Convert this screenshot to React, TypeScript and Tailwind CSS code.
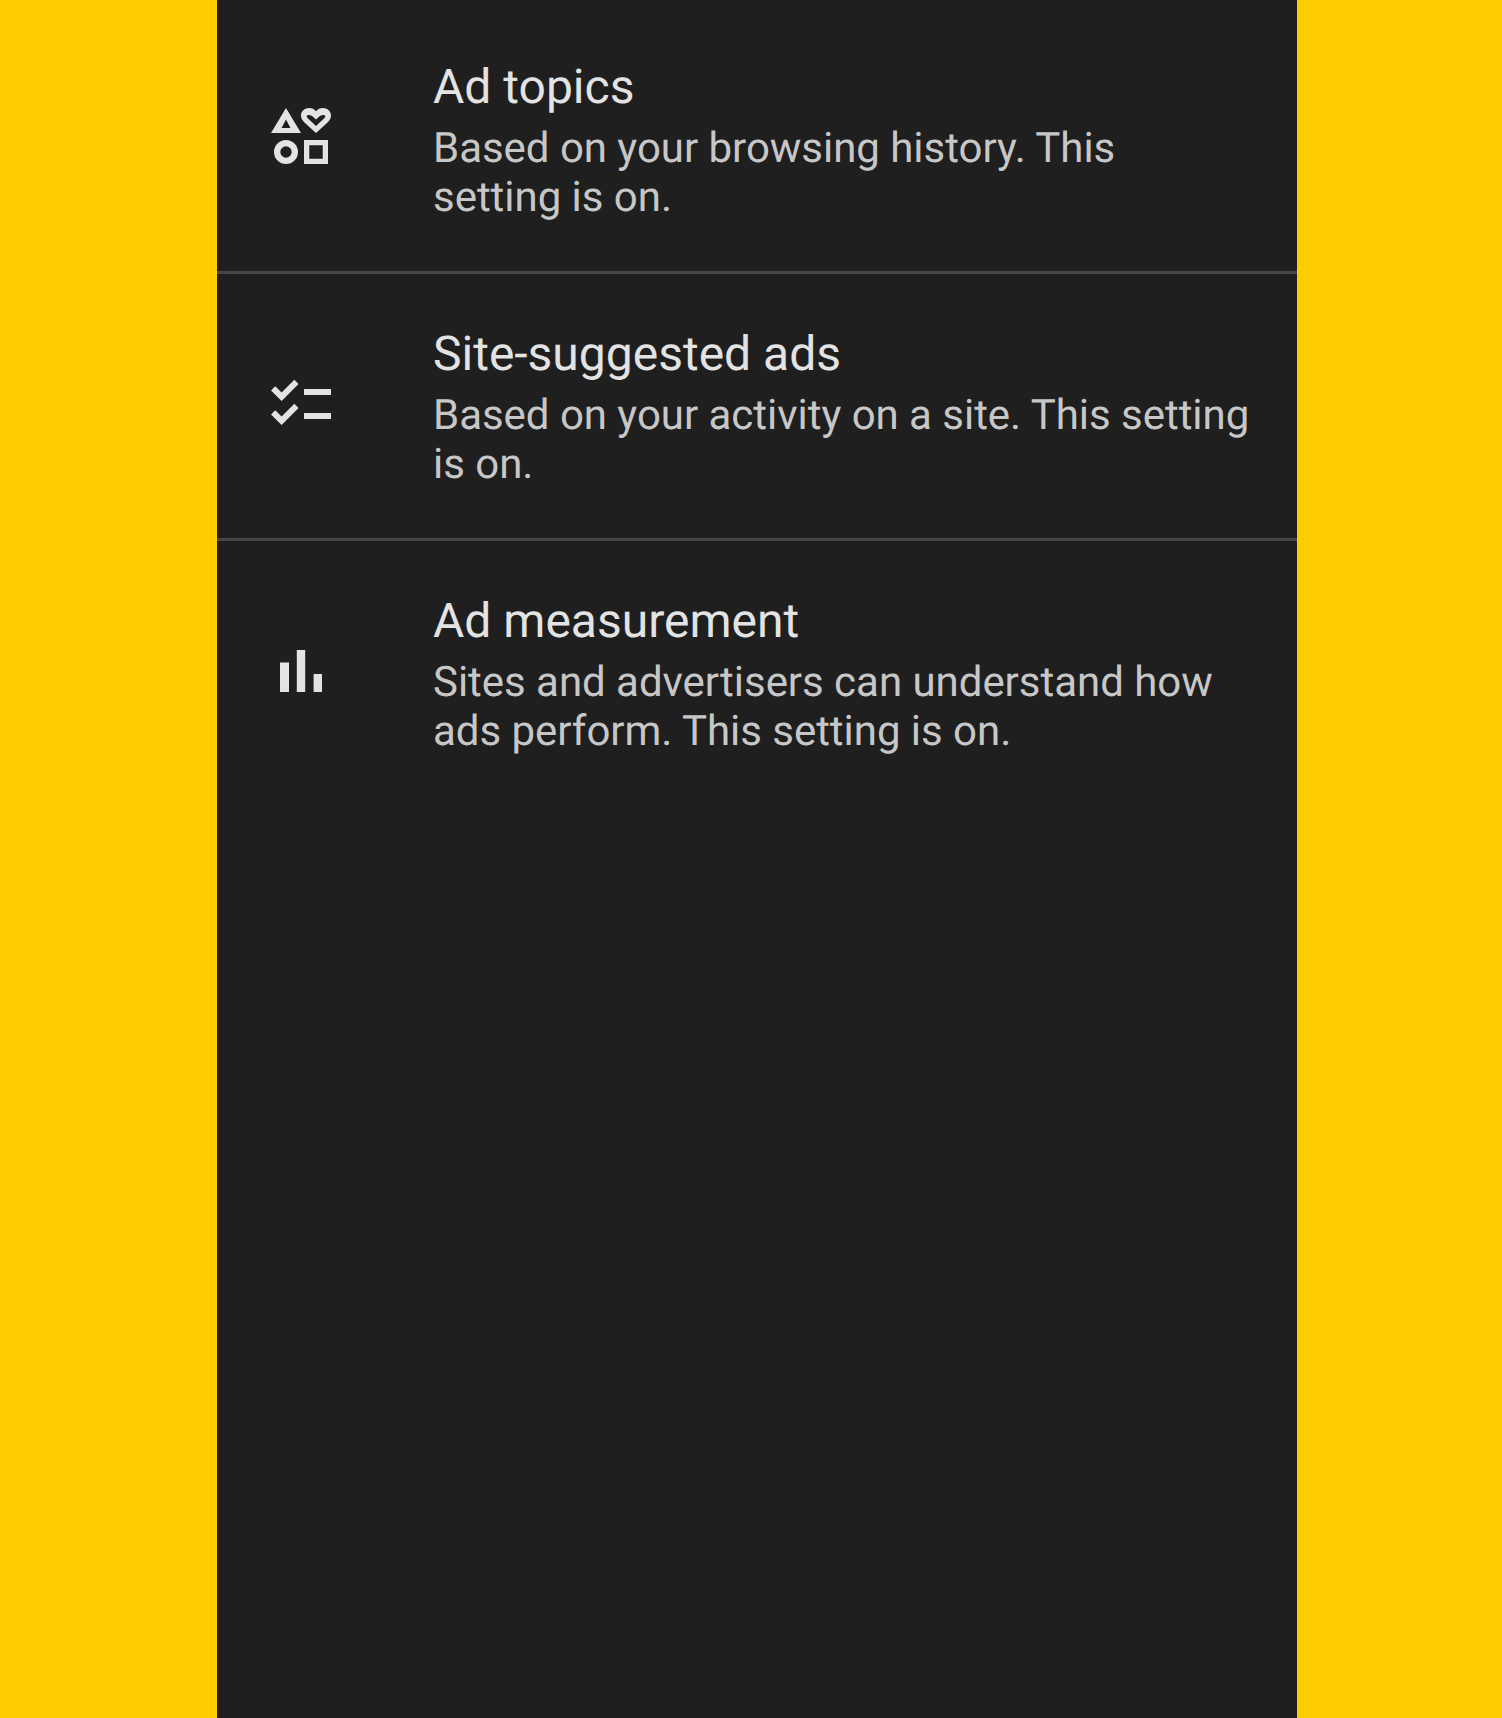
import type { ReactNode } from "react";

const ICON_PATHS = {
  interests:
    "M7 2.33 12 10.67H2L7 2.33ZM7 6.2 5.5 9H8.5L7 6.2ZM7 13a4 4 0 1 0 0 8 4 4 0 0 0 0-8ZM7 15.1a1.9 1.9 0 1 1 0 3.8 1.9 1.9 0 0 1 0-3.8ZM13 13h8v8h-8ZM14.75 14.75v4.5h4.5v-4.5ZM17 10.67 13.3 7.3C12.4 6.4 12 5.7 12 4.9 12 3.4 13.2 2.33 14.7 2.33 15.6 2.33 16.5 2.75 17 3.4 17.5 2.75 18.4 2.33 19.3 2.33 20.8 2.33 22 3.4 22 4.9 22 5.7 21.6 6.4 20.7 7.3ZM17 8.3 19.5 6C19.9 5.6 20.1 5.4 20.1 5.1 20.1 4.8 19.7 4.65 19.3 4.65 18.8 4.65 18.4 4.9 18.1 5.2L17 6.2 15.9 5.2C15.6 4.9 15.2 4.65 14.7 4.65 14.3 4.65 13.9 4.8 13.9 5.1 13.9 5.4 14.1 5.6 14.5 6Z",
  checklist:
    "M22 7h-9v2h9V7zm0 8h-9v2h9v-2zM5.54 11 2 7.46l1.41-1.41 2.12 2.12 4.24-4.24 1.41 1.41L5.54 11zm0 8L2 15.46l1.41-1.41 2.12 2.12 4.24-4.24 1.41 1.41L5.54 19z",
  barChart: "M5 9.2h3V19H5zM10.6 5h2.8v14h-2.8zM16.2 13H19v6h-2.8z",
};

function Icon({ d }: { d: string }) {
  return (
    <svg viewBox="0 0 24 24" className="h-[72px] w-[72px] fill-[#e3e3e3]">
      <path d={d} fillRule="evenodd" />
    </svg>
  );
}

function SettingRow({
  icon,
  title,
  children,
  divider,
}: {
  icon: string;
  title: string;
  children: ReactNode;
  divider?: boolean;
}) {
  return (
    <div className={`flex h-[267px] ${divider ? "border-b-[3px] border-[#474747]" : ""}`}>
      <div className="w-[216px] shrink-0 pl-[48px] pt-[94px]">
        <Icon d={icon} />
      </div>
      <div className="pr-[45px] pt-[50px]">
        <h2 className="text-[48px] leading-[60px] text-[#e3e3e3]">{title}</h2>
        <p className="mt-[7px] text-[42px] leading-[49px] tracking-[-0.03px] text-[#c7c7c7]">{children}</p>
      </div>
    </div>
  );
}

export default function App() {
  return (
    <div className="flex h-[1718px] bg-[#ffcc00] font-['Roboto',sans-serif] [text-rendering:geometricPrecision]">
      <div className="ml-[217px] h-full w-[1080px] bg-[#1f1f1f] pt-[7px]">
        <SettingRow icon={ICON_PATHS.interests} title="Ad topics" divider>
          Based on your browsing history. This setting is on.
        </SettingRow>
        <SettingRow icon={ICON_PATHS.checklist} title="Site-suggested ads" divider>
          Based on your activity on a site. This setting is on.
        </SettingRow>
        <SettingRow icon={ICON_PATHS.barChart} title="Ad measurement">
          Sites and advertisers can understand how ads perform. This setting is on.
        </SettingRow>
      </div>
    </div>
  );
}
